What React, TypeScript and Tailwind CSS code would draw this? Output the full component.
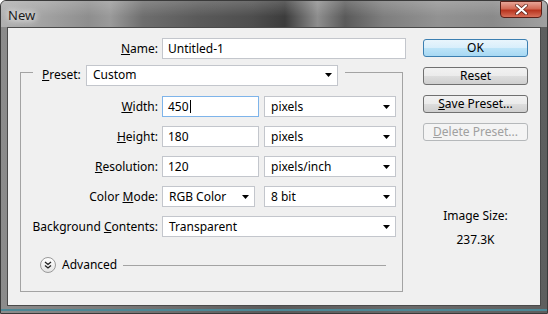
import React from 'react'

const font = { fontFamily: '"Noto Sans", "DejaVu Sans", sans-serif' }

function Arrow() {
  return (
    <svg width="7" height="4" viewBox="0 0 7 4" className="shrink-0">
      <path d="M0 0H7L3.5 4Z" fill="#000" />
    </svg>
  )
}

function Select({ value, className }: { value: string; className: string }) {
  return (
    <div
      className={`flex h-[21px] items-center justify-between border border-[#c3c6cc] bg-white pl-[6px] pr-[5px] ${className}`}
    >
      <span>{value}</span>
      <Arrow />
    </div>
  )
}

function Input({ value, className, focused }: { value: string; className: string; focused?: boolean }) {
  return (
    <div
      className={`flex h-[21px] items-center bg-white pl-[5px] border ${
        focused ? 'border-[#7eb4ea]' : 'border-[#c3c6cc]'
      } ${className}`}
    >
      <span>{value}</span>
      {focused && <span className="ml-px h-[13px] w-px bg-black" />}
    </div>
  )
}

function Label({ children }: { children: React.ReactNode }) {
  return (
    <div className="flex w-[129px] shrink-0 justify-end whitespace-nowrap pr-[4px]">
      <span>{children}</span>
    </div>
  )
}

function Button({
  children,
  kind = 'normal',
}: {
  children: React.ReactNode
  kind?: 'default' | 'normal' | 'disabled'
}) {
  const style =
    kind === 'default'
      ? 'border-[#3c7fb1] bg-[linear-gradient(180deg,#e9f5fc_0%,#d8eefb_50%,#bde4f8_51%,#a7d8f3_100%)] text-black'
      : kind === 'disabled'
        ? 'border-[#b5b8ba] bg-[#f4f4f4] text-[#a0a0a0]'
        : 'border-[#707070] bg-[linear-gradient(180deg,#f2f2f2_0%,#ebebeb_50%,#dddddd_51%,#cfcfcf_100%)] text-black'
  return (
    <div className={`flex h-[18px] items-center justify-center rounded-[3px] border ${style}`}>
      {children}
    </div>
  )
}

export default function App() {
  return (
    <div
      className="relative h-[314px] w-[548px] overflow-hidden rounded-t-[6px] border border-[#3a3a3a] bg-[linear-gradient(90deg,#8c8c8c_0%,#7a7a7a_20%,#5a5a5a_50%,#6a6a6a_75%,#5e5e5e_100%)] text-[12px] text-black"
      style={font}
    >
      {/* title bar */}
      <div className="flex h-[26px] items-start justify-between bg-[linear-gradient(180deg,rgba(255,255,255,0.18)_0%,rgba(255,255,255,0)_60%),linear-gradient(90deg,#b0b0b0_0%,#a2a2a2_8%,#8e8e8e_16%,#9a9a9a_20%,#6e6e6e_26%,#5a5a5a_36%,#4e4e4e_46%,#3c3c3c_52%,#8e8e8e_58%,#5a5a5a_63%,#7e7e7e_70%,#929292_80%,#8a8a8a_90%,#a0a0a0_100%)]">
        <div className="pl-[7px] pt-[5px] text-[13px] text-[#1c1c1c] [text-shadow:0_0_6px_#fff,0_0_10px_#fff]">New</div>
        <div className="mr-[5px] mt-0 flex h-[17px] w-[42px] items-center justify-center rounded-b-[4px] border border-[#5a2018] bg-[linear-gradient(180deg,#e7a597_0%,#d26a55_45%,#b8341e_55%,#d8705a_100%)]">
          <svg width="13" height="11" viewBox="0 0 13 11">
            <path d="M2 1.5L11 9.5M11 1.5L2 9.5" stroke="#5a2018" strokeWidth="3.6" strokeLinecap="round" />
            <path d="M2 1.5L11 9.5M11 1.5L2 9.5" stroke="#fff" strokeWidth="2.2" strokeLinecap="round" />
          </svg>
        </div>
      </div>

      {/* client area */}
      <div className="mx-[6px] flex h-[279px] border border-[#4a4a4a] bg-[#f0f0f0]">
        <div className="w-[400px] pt-[10px]">
          <div className="flex h-[21px] items-center">
            <div className="w-[154px] pr-[4px] text-right">
              <u>N</u>ame:
            </div>
            <Input value="Untitled-1" className="w-[244px]" />
          </div>

          <fieldset className="ml-[12px] w-[383px] border border-[#a3a3a3] pb-[18px] pl-[12px] pt-[10px]">
            <legend className="pl-[9px] pr-[7px] pt-[5px]">
              <div className="flex h-[22px] items-center">
                <span className="w-[44px]">
                  <u>P</u>reset:
                </span>
                <Select value="Custom" className="w-[252px]" />
              </div>
            </legend>

            <div className="flex flex-col gap-[9px]">
              <div className="flex h-[21px] items-center">
                <Label>
                  <u>W</u>idth:
                </Label>
                <Input value="450" focused className="w-[97px]" />
                <Select value="pixels" className="ml-[5px] w-[132px]" />
              </div>
              <div className="flex h-[21px] items-center">
                <Label>
                  <u>H</u>eight:
                </Label>
                <Input value="180" className="w-[97px]" />
                <Select value="pixels" className="ml-[5px] w-[132px]" />
              </div>
              <div className="flex h-[21px] items-center">
                <Label>
                  <u>R</u>esolution:
                </Label>
                <Input value="120" className="w-[97px]" />
                <Select value="pixels/inch" className="ml-[5px] w-[132px]" />
              </div>
              <div className="flex h-[21px] items-center">
                <Label>
                  Color <u>M</u>ode:
                </Label>
                <Select value="RGB Color" className="w-[93px]" />
                <Select value="8 bit" className="ml-[9px] w-[132px]" />
              </div>
              <div className="flex h-[21px] items-center">
                <Label>
                  Background <u>C</u>ontents:
                </Label>
                <Select value="Transparent" className="w-[234px]" />
              </div>
            </div>

            {/* advanced */}
            <div className="mt-[20px] flex h-[16px] items-center pl-[7px] pr-[16px]">
              <div className="flex h-[16px] w-[16px] items-center justify-center rounded-full border border-[#9a9a9a] bg-[linear-gradient(180deg,#ffffff_0%,#e4e4e4_100%)]">
                <svg width="8" height="8" viewBox="0 0 8 8">
                  <path d="M1 1L4 3.5L7 1M1 4.5L4 7L7 4.5" fill="none" stroke="#222" strokeWidth="1.3" />
                </svg>
              </div>
              <span className="ml-[6px]">Advanced</span>
              <div className="ml-[6px] h-px flex-1 bg-[#a3a3a3]" />
            </div>
          </fieldset>
        </div>

        {/* right column */}
        <div className="ml-[15px] flex w-[105px] flex-col pt-[11px]">
          <div className="flex flex-col gap-[10px]">
            <Button kind="default">OK</Button>
            <Button>Reset</Button>
            <Button>
              <span>
                <u>S</u>ave Preset...
              </span>
            </Button>
            <Button kind="disabled">
              <span>
                <u>D</u>elete Preset...
              </span>
            </Button>
          </div>
          <div className="mt-[67px] text-center leading-[16px]">Image Size:</div>
          <div className="mt-[8px] text-center leading-[16px]">237.3K</div>
        </div>
      </div>
      <div className="h-[5px] border-b-2 border-[#4d8795]" />
    </div>
  )
}
